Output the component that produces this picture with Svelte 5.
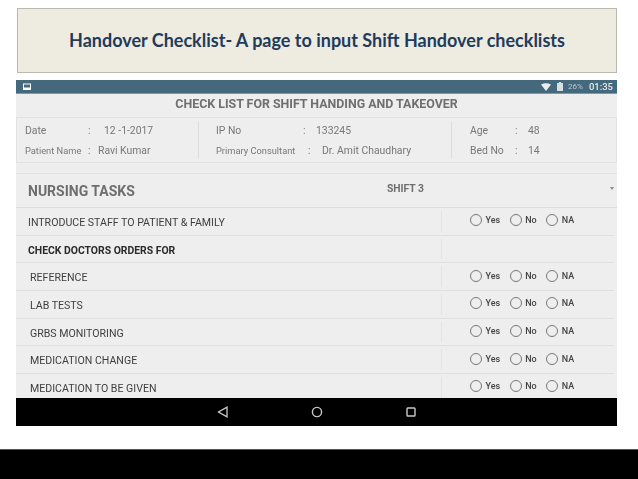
<script>
  const tasks = [
    { label: 'INTRODUCE STAFF TO PATIENT & FAMILY', kind: 'top', radios: true },
    { label: 'CHECK DOCTORS ORDERS FOR', kind: 'head', radios: false },
    { label: 'REFERENCE', kind: 'sub', radios: true },
    { label: 'LAB TESTS', kind: 'sub', radios: true },
    { label: 'GRBS MONITORING', kind: 'sub', radios: true },
    { label: 'MEDICATION CHANGE', kind: 'sub', radios: true },
    { label: 'MEDICATION TO BE GIVEN', kind: 'sub', radios: true }
  ];
  const options = ['Yes', 'No', 'NA'];
</script>

<div class="page">
  <header class="banner">
    <h1>Handover Checklist- A page to input Shift Handover checklists</h1>
  </header>

  <section class="tablet">
    <div class="status">
      <svg class="screenshot-icon" viewBox="0 0 8 8" width="8" height="8">
        <rect x="0.5" y="1" width="7" height="5.5" fill="none" stroke="#fff" />
        <rect x="0.5" y="4.5" width="7" height="2" fill="#fff" />
      </svg>
      <span class="status-right">
        <svg viewBox="0 0 10 8" width="10" height="8">
          <path d="M0 1.5 Q5 -1 10 1.5 L5 8 Z" fill="#e8eef1" />
        </svg>
        <svg class="battery" viewBox="0 0 6 9" width="6" height="9">
          <rect x="0" y="1" width="6" height="8" fill="#d5dfe4" />
          <rect x="2" y="0" width="2" height="1" fill="#d5dfe4" />
        </svg>
        <span class="pct">26%</span>
        <span class="clock">01:35</span>
      </span>
    </div>

    <h2 class="form-title">CHECK LIST FOR SHIFT HANDING AND TAKEOVER</h2>

    <div class="info">
      <div class="cell first">
        <span class="big">Date</span><span class="big">:</span><span class="big v1">12 -1-2017</span>
        <span class="small">Patient Name</span><span class="big">:</span><span class="big">Ravi Kumar</span>
      </div>
      <div class="cell second">
        <span class="big">IP No</span><span class="big">:</span><span class="big">133245</span>
        <span class="small">Primary Consultant</span><span class="big c2b">:</span><span class="big v2b">Dr. Amit Chaudhary</span>
      </div>
      <div class="cell third">
        <span class="big">Age</span><span class="big">:</span><span class="big">48</span>
        <span class="big">Bed No</span><span class="big">:</span><span class="big">14</span>
      </div>
    </div>

    <div class="section">
      <span class="section-name">NURSING TASKS</span>
      <span class="shift">SHIFT 3</span>
      <span class="caret"></span>
    </div>

    <div class="rows">
      {#each tasks as task}
        <div class="row">
          <div class="task {task.kind}">{task.label}</div>
          <div class="answers">
            {#if task.radios}
              {#each options as opt}
                <span class="opt"><span class="radio"></span>{opt}</span>
              {/each}
            {/if}
          </div>
        </div>
      {/each}
    </div>

    <nav class="nav">
      <svg viewBox="0 0 12 12" width="12" height="12">
        <path d="M10 1.2 V10.8 L1.5 6 Z" fill="none" stroke="#c9c9c9" stroke-width="1.3" />
      </svg>
      <svg viewBox="0 0 12 12" width="12" height="12">
        <circle cx="6" cy="6" r="4.6" fill="none" stroke="#c9c9c9" stroke-width="1.4" />
      </svg>
      <svg viewBox="0 0 12 12" width="12" height="12">
        <rect x="2" y="2" width="8" height="8" rx="0.8" fill="none" stroke="#c9c9c9" stroke-width="1.4" />
      </svg>
    </nav>
  </section>

  <footer class="bottom"></footer>
</div>

<style>
  :global(body) {
    margin: 0;
    background: #fff;
  }

  .page {
    width: 638px;
    height: 479px;
    overflow: hidden;
    padding-top: 8px;
    box-sizing: border-box;
    display: flex;
    flex-direction: column;
    font-family: Roboto, "Liberation Sans", sans-serif;
  }

  .banner {
    margin-left: 17px;
    width: 600px;
    height: 65px;
    box-sizing: border-box;
    background: #eeebe0;
    border: 1px solid #b9b9b2;
    display: flex;
    align-items: center;
    justify-content: center;
  }

  h1 {
    margin: 0 0 1px;
    font-family: Lato, "Open Sans", sans-serif;
    font-weight: 700;
    font-size: 18px;
    color: #1f3b5c;
    white-space: nowrap;
  }

  .tablet {
    margin-top: 7px;
    margin-left: 16px;
    width: 601px;
    height: 346px;
    background: #eeeeee;
    display: flex;
    flex-direction: column;
    filter: blur(0.35px);
  }

  .status {
    background: #44687c;
    display: flex;
    align-items: center;
    justify-content: space-between;
    padding: 0 4px 0 7px;
    border-bottom: 1px solid #7d98a6;
    height: 13px;
    flex: none;
  }

  .screenshot-icon {
    display: block;
  }

  .status-right {
    display: flex;
    align-items: center;
    gap: 5px;
  }

  .battery {
    margin-left: 1px;
  }

  .pct {
    font-size: 8px;
    color: #b9cad3;
  }

  .clock {
    font-size: 9.5px;
    font-weight: 500;
    color: #e3eaee;
    margin-left: 1px;
  }

  .form-title {
    margin: 0;
    height: 23px;
    line-height: 19px;
    text-align: center;
    font-size: 12.4px;
    font-weight: 700;
    color: #6f6f6f;
    white-space: nowrap;
    flex: none;
  }

  .info {
    height: 46px;
    flex: none;
    box-sizing: border-box;
    border: 1px solid #e2e2e2;
    display: flex;
    align-items: center;
    color: #777;
  }

  .cell {
    display: grid;
    align-items: center;
    row-gap: 3px;
    height: 36px;
    box-sizing: border-box;
    border-right: 1px solid #dcdcdc;
    grid-auto-rows: 17px;
  }

  .first {
    width: 182px;
    padding-left: 8px;
    grid-template-columns: 63px 10px 1fr;
  }

  .second {
    width: 253px;
    padding-left: 17px;
    grid-template-columns: 87px 13px 1fr;
  }

  .third {
    flex: 1;
    border-right: 0;
    padding-left: 18px;
    grid-template-columns: 45px 13px 1fr;
  }

  .big {
    font-size: 10.4px;
    white-space: nowrap;
  }

  .small {
    font-size: 9.3px;
    white-space: nowrap;
  }

  .v1,
  .v2b {
    margin-left: 6px;
  }

  .c2b {
    margin-left: 5px;
  }

  .section {
    margin-top: 10px;
    height: 34px;
    flex: none;
    box-sizing: border-box;
    border-top: 1px solid #e2e2e2;
    display: flex;
    align-items: center;
    position: relative;
    padding-left: 12px;
  }

  .section-name {
    font-size: 14px;
    font-weight: 700;
    color: #6e6e6e;
    width: 359px;
  }

  .shift {
    font-size: 10.3px;
    font-weight: 700;
    color: #6e6e6e;
    margin-bottom: 5px;
  }

  .caret {
    position: absolute;
    right: 3px;
    top: 13px;
    border-left: 2.5px solid transparent;
    border-right: 2.5px solid transparent;
    border-top: 3px solid #8c8c8c;
  }

  .rows {
    flex: 1;
    overflow: hidden;
    border-top: 1px solid #dedede;
  }

  .row {
    height: 27.7px;
    box-sizing: border-box;
    display: flex;
    border-bottom: 1px solid #e0e0e0;
    margin-right: 3px;
  }

  .task {
    width: 425px;
    box-sizing: border-box;
    padding: 2px 0 0 12px;
    display: flex;
    align-items: center;
    font-size: 10.6px;
    color: #3e3e3e;
    white-space: nowrap;
  }

  .task.sub {
    padding-left: 14px;
  }

  .task.head {
    font-size: 10.4px;
    font-weight: 700;
    color: #2a2a2a;
  }

  .answers {
    flex: 1;
    margin: 3px 0;
    border-left: 1px solid #e3e3e3;
    padding: 0 0 2px 28px;
    display: flex;
    align-items: center;
    gap: 9.5px;
  }

  .opt {
    display: flex;
    align-items: center;
    gap: 3.5px;
    font-size: 9px;
    font-weight: 500;
    color: #444;
  }

  .radio {
    width: 12px;
    height: 12px;
    box-sizing: border-box;
    border: 1px solid #777;
    border-radius: 50%;
  }

  .nav {
    flex: 0 0 28px;
    background: #000;
    display: flex;
    align-items: center;
    justify-content: center;
    gap: 82px;
  }

  .bottom {
    margin-top: 23px;
    flex: 1;
    background: #000;
    border-top: 1px solid #555;
  }
</style>
